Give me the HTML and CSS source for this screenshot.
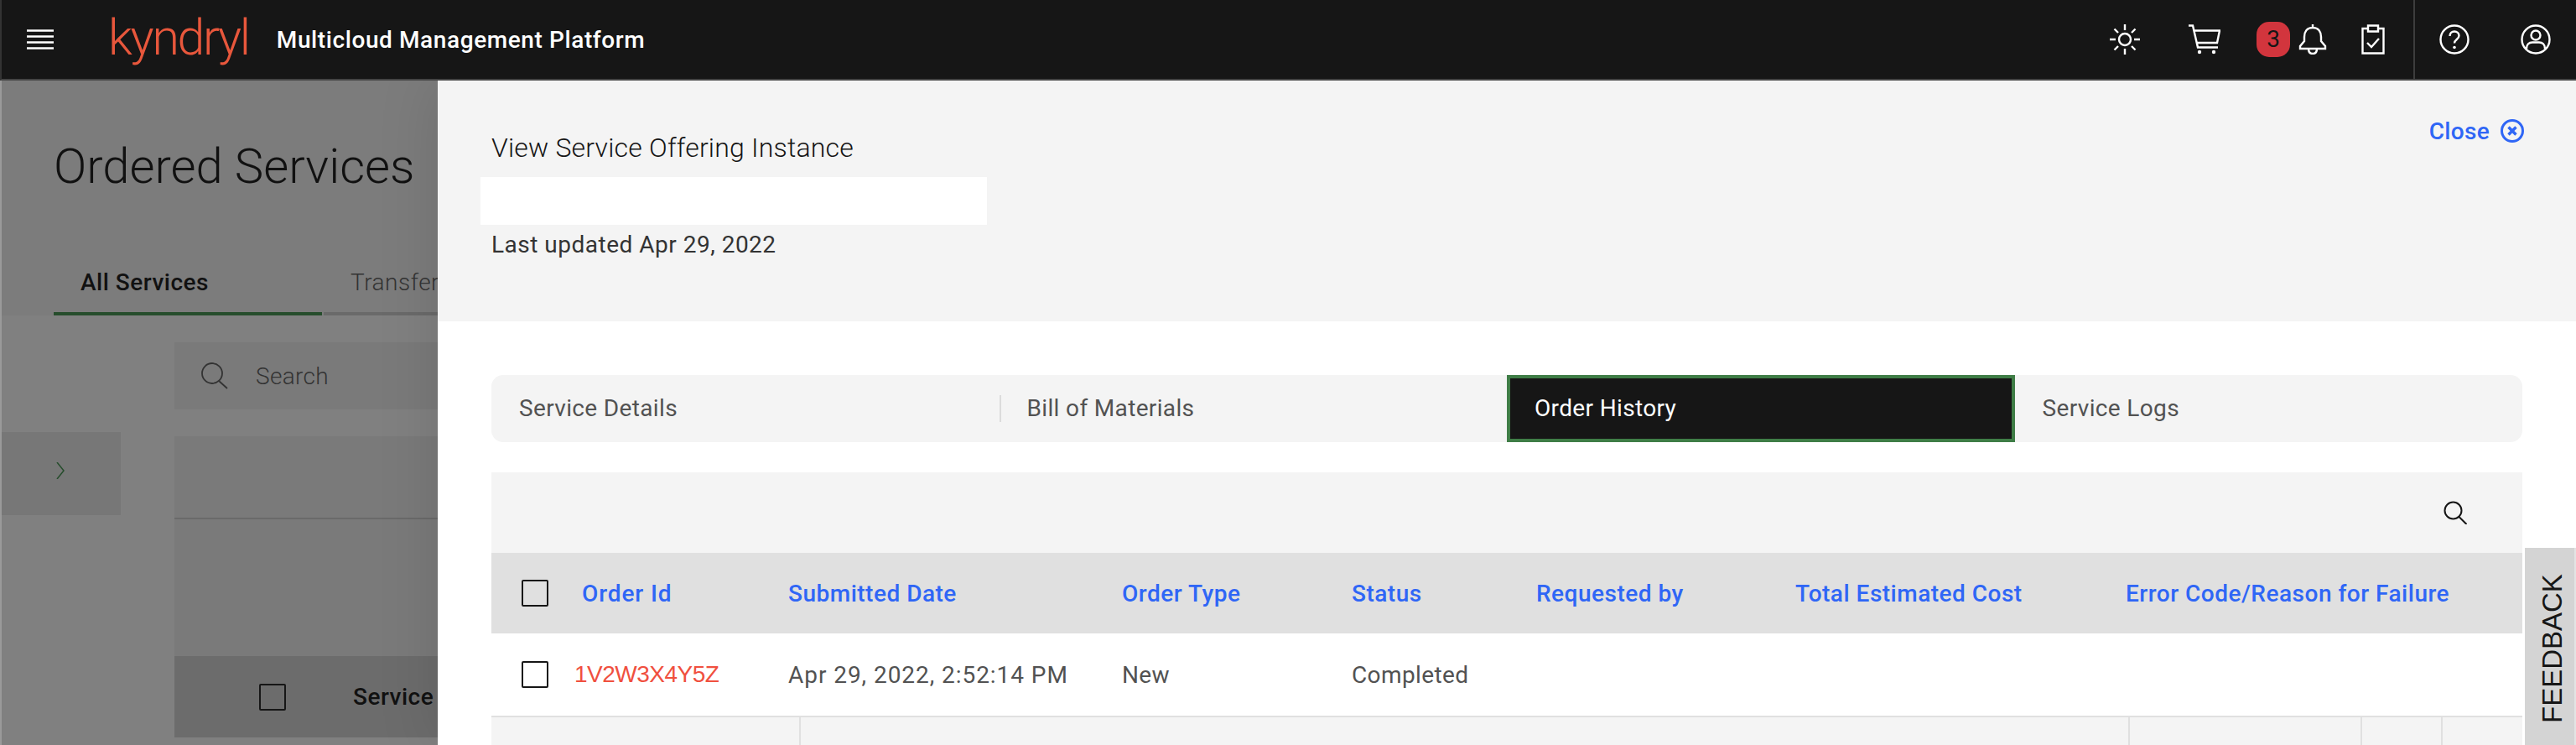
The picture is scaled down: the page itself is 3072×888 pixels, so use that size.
FILE: index.html
```html
<!DOCTYPE html>
<html lang="en">
<head>
    <meta charset="UTF-8">
    <title>Multicloud Management Platform</title>
    <link rel="stylesheet" href="styles.css">
</head>
<body>
    <header class="topbar">
        <button class="menu-button" aria-label="Menu">
            <svg width="32" height="24" viewBox="0 0 32 24"><path d="M0 1.500h32M0 8.500h32M0 15.500h32M0 22.500h32" stroke="#fff" stroke-width="2.500"/></svg>
        </button>
        <span class="logo">kyndryl</span>
        <span class="product-name">Multicloud Management Platform</span>
        <div class="topbar-icons">
            <svg class="icon sun" width="36" height="36" viewBox="0 0 36 36" fill="none" stroke="#fff" stroke-width="2.400">
                <circle cx="18" cy="18" r="7"/>
                <path d="M18 0v7M18 29v7M0 18h7M29 18h7M5.500 5.500l4.500 4.500M26 26l4.500 4.500M30.500 5.500L26 10M10 26l-4.500 4.500"/>
            </svg>
            <svg class="icon cart" width="38" height="36" viewBox="0 0 38 36" fill="none" stroke="#fff" stroke-width="2.400">
                <path d="M0 1.500h5l6 26h24M7 7.500h30l-3 14.500H10.500"/>
                <circle cx="13" cy="33" r="2.200" fill="#fff" stroke="none"/>
                <circle cx="30" cy="33" r="2.200" fill="#fff" stroke="none"/>
            </svg>
            <span class="badge">3</span>
            <svg class="icon bell" width="34" height="36" viewBox="0 0 34 36" fill="none" stroke="#fff" stroke-width="2.400">
                <path d="M17 0v4M17 4c-7 0-10 5-10 11v5l-5 6v3h30v-3l-5-6v-5c0-6-3-11-10-11zM12 29c0 4 2 6 5 6s5-2 5-6"/>
            </svg>
            <svg class="icon clipboard" width="28" height="36" viewBox="0 0 28 36" fill="none" stroke="#fff" stroke-width="2.400">
                <path d="M8 5H1.500v29.500h25V5H20M8 1.500h12v7H8zM7 22l5 5 9-10"/>
            </svg>
            <span class="topbar-divider"></span>
            <svg class="icon help" width="36" height="36" viewBox="0 0 36 36" fill="none" stroke="#fff" stroke-width="2.400">
                <circle cx="18" cy="18" r="16.500"/>
                <path d="M12.500 14c0-3.500 2.500-5.500 5.500-5.500s5.500 2 5.500 5c0 4.500-5.500 4.500-5.500 9"/>
                <circle cx="18" cy="27.500" r="1.800" fill="#fff" stroke="none"/>
            </svg>
            <svg class="icon user" width="36" height="36" viewBox="0 0 36 36" fill="none" stroke="#fff" stroke-width="2.400">
                <circle cx="18" cy="18" r="16.500"/>
                <circle cx="18" cy="13" r="5.500"/>
                <path d="M7 29c0-5 3-7.500 7-7.500h8c4 0 7 2.500 7 7.500"/>
            </svg>
        </div>
    </header>

    <main class="page">
        <div class="page-top">
            <h1 class="page-title">Ordered Services</h1>
            <div class="page-tabs">
                <span class="page-tab selected">All Services</span>
                <span class="page-tab">Transfer</span>
            </div>
        </div>
        <div class="page-content">
            <div class="filter-toggle">
                <svg width="10" height="20" viewBox="0 0 10 20" fill="none" stroke="#264d2c" stroke-width="1.500"><path d="M1 0l8 10-8 10"/></svg>
            </div>
            <div class="page-table">
                <div class="page-search">
                    <svg width="32" height="32" viewBox="0 0 32 32" fill="none" stroke="#333" stroke-width="1.800"><ellipse cx="13" cy="13" rx="12" ry="12"/><path d="M21 22l10 9"/></svg>
                    <span>Search</span>
                </div>
                <div class="page-toolbar"></div>
                <div class="page-table-body"></div>
                <div class="page-table-head">
                    <span class="box"></span>
                    <b>Service</b>
                </div>
            </div>
        </div>

        <section class="panel">
            <div class="panel-head">
                <div class="panel-info">
                    <div class="panel-title">View Service Offering Instance</div>
                    <div class="panel-name"></div>
                    <div class="panel-updated">Last updated Apr 29, 2022</div>
                </div>
                <a class="close-link">Close
                    <svg width="28" height="28" viewBox="0 0 28 28" fill="none" stroke="#2f66f6" stroke-width="3"><circle cx="14" cy="14" r="12.500"/><path d="M9.500 9.500l9 9M18.500 9.500l-9 9" stroke-width="3.500"/></svg>
                </a>
            </div>
            <div class="panel-body">
                <nav class="tabs">
                    <a class="tab">Service Details</a>
                    <a class="tab with-line">Bill of Materials</a>
                    <a class="tab active">Order History</a>
                    <a class="tab">Service Logs</a>
                </nav>
                <div class="orders">
                    <div class="orders-toolbar">
                        <svg width="28" height="28" viewBox="0 0 28 28" fill="none" stroke="#161616" stroke-width="2"><circle cx="11.500" cy="11.500" r="10"/><path d="M18.500 19l9 9"/></svg>
                    </div>
                    <div class="orders-row orders-header">
                        <span class="cell-check"><span class="box"></span></span>
                        <span class="order-id">Order Id</span>
                        <span>Submitted Date</span>
                        <span>Order Type</span>
                        <span>Status</span>
                        <span>Requested by</span>
                        <span>Total Estimated Cost</span>
                        <span>Error Code/Reason for Failure</span>
                    </div>
                    <div class="orders-row orders-item">
                        <span class="cell-check"><span class="box"></span></span>
                        <a class="order-link">1V2W3X4Y5Z</a>
                        <span class="order-date">Apr 29, 2022, 2:52:14 PM</span>
                        <span>New</span>
                        <span>Completed</span>
                        <span></span>
                        <span></span>
                        <span></span>
                    </div>
                    <div class="orders-detail">
                        <span></span><span></span><span></span><span></span><span></span>
                    </div>
                </div>
            </div>
        </section>
        <div class="feedback"><span>FEEDBACK</span></div>
    </main>
</body>
</html>
```

FILE: styles.css
```css
* {
    box-sizing: border-box;
}
body {
    margin: 0;
    width: 3072px;
    height: 888px;
    overflow: hidden;
    font-family: Roboto, "Noto Sans", sans-serif;
    font-size: 28px;
    background-color: #7f7f7f;
}

/* top bar */
.topbar {
    display: flex;
    align-items: center;
    height: 96px;
    padding-left: 30px;
    background-color: #161616;
    border-left: 2px solid #333333;
    border-bottom: 2px solid #444444;
    color: #ffffff;
}
.menu-button {
    display: flex;
    padding: 0;
    border: none;
    background: none;
}
.logo {
    margin-left: 65px;
    margin-top: -6px;
    font-size: 59px;
    font-weight: 300;
    letter-spacing: -2.300px;
    color: #e8573c;
}
.product-name {
    margin-left: 33px;
    font-weight: 500;
    letter-spacing: 0.600px;
}
.topbar-icons {
    display: flex;
    align-items: center;
    align-self: stretch;
    margin-left: auto;
    padding-right: 30px;
}
.icon {
    flex: none;
}
.cart {
    margin-left: 58px;
}
.badge {
    width: 40px;
    height: 42px;
    margin-left: 43px;
    border-radius: 15px;
    background-color: #d2353d;
    color: #161616;
    line-height: 42px;
    text-align: center;
}
.bell {
    margin-left: 10px;
}
.clipboard {
    margin-left: 41px;
}
.topbar-divider {
    align-self: stretch;
    width: 2px;
    margin-left: 34px;
    background-color: #3d3d3d;
}
.help {
    margin-left: 29px;
}
.user {
    margin-left: 61px;
}

/* dimmed page behind the panel */
.page {
    position: relative;
    height: 792px;
    overflow: hidden;
    border-left: 2px solid #9a9a9a;
    background-color: #808080;
}
.page-top {
    height: 280px;
    background-color: #7c7c7c;
}
.page-title {
    margin: 0;
    padding: 70px 0 0 62px;
    font-size: 58px;
    line-height: 64px;
    font-weight: 300;
    color: #111111;
}
.page-tabs {
    display: flex;
    margin-top: 80px;
    padding-left: 62px;
}
.page-tab {
    width: 320px;
    height: 66px;
    margin-right: 2px;
    padding-left: 32px;
    border-bottom: 4px solid #6a6a6a;
    line-height: 54px;
    letter-spacing: 0.500px;
    color: #333333;
    font-weight: 300;
}
.page-tab.selected {
    border-bottom-color: #264d2c;
    color: #111111;
    font-weight: 500;
}
.page-content {
    display: flex;
    padding-top: 32px;
}
.filter-toggle {
    display: flex;
    width: 142px;
    height: 99px;
    margin-top: 107px;
    padding: 36px 0 0 65px;
    background-color: #777777;
}
.page-table {
    margin-left: 64px;
    flex: 1;
}
.page-search {
    display: flex;
    align-items: center;
    gap: 33px;
    height: 80px;
    padding-left: 32px;
    background-color: #7a7a7a;
    color: #333333;
    font-weight: 300;
    letter-spacing: 0.300px;
}
.page-toolbar {
    height: 99px;
    margin-top: 32px;
    background-color: #7a7a7a;
    border-bottom: 2px solid #6a6a6a;
}
.page-table-body {
    height: 163px;
    background-color: #7a7a7a;
}
.page-table-head {
    display: flex;
    align-items: center;
    height: 97px;
    padding-left: 101px;
    background-color: #6c6c6c;
    color: #111111;
}
.page-table-head b {
    margin-left: 80px;
    font-weight: 500;
    letter-spacing: 0.500px;
}
.box {
    display: block;
    width: 32px;
    height: 32px;
    border: 2px solid #161616;
    border-radius: 2px;
}

/* side panel */
.panel {
    position: absolute;
    top: 0;
    left: 520px;
    right: 0;
    bottom: 0;
    background-color: #ffffff;
    box-shadow: 0 0 70px rgba(0, 0, 0, 0.12);
}
.panel-head {
    display: flex;
    justify-content: space-between;
    height: 287px;
    padding: 46px 62px 0 64px;
    background-color: #f4f4f4;
}
.panel-info {
    padding-top: 14px;
}
.panel-title {
    font-size: 32px;
    line-height: 40px;
    font-weight: 300;
    letter-spacing: 0.200px;
    color: #161616;
}
.panel-name {
    width: 604px;
    height: 57px;
    margin: 15px 0 0 -13px;
    background-color: #ffffff;
}
.panel-updated {
    margin-top: 6px;
    line-height: 36px;
    letter-spacing: 0.500px;
    color: #333333;
}
.close-link {
    display: flex;
    align-items: center;
    align-self: flex-start;
    gap: 13px;
    height: 28px;
    color: #2f66f6;
    font-weight: 500;
    letter-spacing: 0.300px;
}
.panel-body {
    padding: 64px 64px 0 64px;
}
.tabs {
    display: grid;
    grid-template-columns: repeat(4, 1fr);
    height: 80px;
    border-radius: 14px;
    background-color: #f4f4f4;
}
.tab {
    position: relative;
    padding-left: 33px;
    line-height: 80px;
    color: #525252;
    letter-spacing: 0.350px;
}
.tab.with-line::before {
    content: "";
    position: absolute;
    left: 0;
    top: 24px;
    height: 32px;
    width: 2px;
    background-color: #dcdcdc;
}
.tab.active {
    padding-left: 29px;
    line-height: 72px;
    background-color: #161616;
    border: 4px solid #3f7d46;
    color: #ffffff;
}
.orders {
    margin-top: 36px;
}
.orders-toolbar {
    display: flex;
    justify-content: flex-end;
    height: 96px;
    padding: 34px 66px 0 0;
    background-color: #f4f4f4;
}
.orders-row {
    display: grid;
    grid-template-columns: 99px 255px 398px 274px 220px 309px 394px 1fr;
    align-items: center;
}
.orders-header {
    height: 96px;
    background-color: #e0e0e0;
    color: #2f66f6;
    font-weight: 500;
    letter-spacing: 0.500px;
}
.orders-item {
    height: 98px;
    color: #525252;
    letter-spacing: 0.400px;
}
.cell-check {
    padding-left: 36px;
}
.order-id {
    margin-left: 9px;
    letter-spacing: 0.900px;
}
.order-link {
    font-family: "Liberation Sans", sans-serif;
    letter-spacing: -0.500px;
    color: #f0503f;
}
.order-date {
    letter-spacing: 0.950px;
}
.orders-detail {
    display: grid;
    grid-template-columns: 369px 1585px 277px 96px 1fr;
    height: 40px;
    background-color: #f4f4f4;
    border-top: 2px solid #e0e0e0;
}
.orders-detail span {
    border-right: 2px solid #e0e0e0;
}
.orders-detail span:last-child {
    border-right: none;
}
.feedback {
    position: absolute;
    left: 3009px;
    right: 0;
    top: 557px;
    bottom: 0;
    background-color: #d4d4d4;
    border-right: 2px solid #e4e4e4;
}
.feedback span {
    position: absolute;
    left: 33px;
    top: 209px;
    transform-origin: 0 0;
    transform: rotate(-90deg) translateY(-50%);
    font-family: "Liberation Sans", sans-serif;
    font-size: 33px;
    color: #161616;
}
```
